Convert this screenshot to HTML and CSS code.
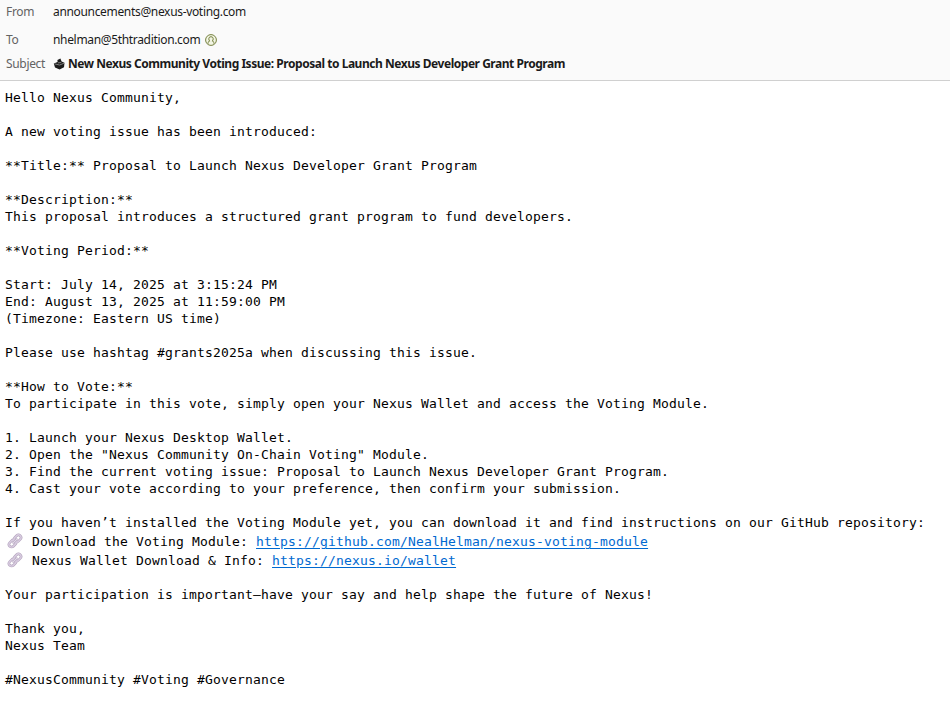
FILE: index.html
```
<!DOCTYPE html>
<html lang="en">
<head>
<meta charset="utf-8">
<title>New Nexus Community Voting Issue</title>
<link rel="stylesheet" href="styles.css">
</head>
<body>
<svg class="defs" width="0" height="0">
  <symbol id="link" viewBox="0 0 16 16">
    <g fill="none" transform="rotate(-45 8 8)">
      <g stroke="#b3a3bd" stroke-width="2.6">
        <rect x="0.6" y="5.4" width="7.6" height="5.2" rx="2.6"/>
        <rect x="7.8" y="5.4" width="7.6" height="5.2" rx="2.6"/>
      </g>
      <g stroke="#d9cde1" stroke-width="1.4">
        <rect x="0.6" y="5.4" width="7.6" height="5.2" rx="2.6"/>
        <rect x="7.8" y="5.4" width="7.6" height="5.2" rx="2.6"/>
      </g>
      <path stroke="#b3a3bd" stroke-width="2" stroke-linecap="round" d="M5.6 8H10.4"/>
      <path stroke="#e4dbea" stroke-width="1" stroke-linecap="round" d="M5.6 8H10.4"/>
    </g>
  </symbol>
</svg>
<header class="header">
  <div class="row from"><span class="label">From</span><span class="value">announcements@nexus-voting.com</span></div>
  <div class="row to"><span class="label">To</span><span class="value">nhelman@5thtradition.com</span>
    <svg class="contact" width="12" height="12" viewBox="0 0 12 12" fill="none" stroke="#75803f"><circle cx="6" cy="6" r="5.4" fill="#f2f5e4"/><path d="M3.2 9.6V8.4Q3.2 7.4 4.7 7.1Q3.8 6.2 3.8 4.7Q4 2.7 6 2.7T8.2 4.7Q8.2 6.2 7.3 7.1Q8.8 7.4 8.8 8.4V9.6"/></svg>
  </div>
  <div class="row subject"><span class="label">Subject</span>
    <svg class="ballot" width="12" height="12" viewBox="0 0 12 12"><path fill="#1c1c1c" d="M.8 5.4 4.6 3.9 4.4 1.9 7.4.6 8.6 3.6 11.5 4.8 11 9.2 6.6 11.4 2 9.6Z"/><path stroke="#aaa" stroke-width=".7" fill="none" d="M1.4 5.8 6.6 7 11 5.2M4.9 4.9 8.3 4.5"/></svg>
    <span class="value title">New Nexus Community Voting Issue: Proposal to Launch Nexus Developer Grant Program</span></div>
</header>
<main class="message">
<div class="text">Hello Nexus Community,

A new voting issue has been introduced:

**Title:** Proposal to Launch Nexus Developer Grant Program

**Description:**
This proposal introduces a structured grant program to fund developers.

**Voting Period:**

Start: July 14, 2025 at 3:15:24 PM
End: August 13, 2025 at 11:59:00 PM
(Timezone: Eastern US time)

Please use hashtag #grants2025a when discussing this issue.

**How to Vote:**
To participate in this vote, simply open your Nexus Wallet and access the Voting Module.

1. Launch your Nexus Desktop Wallet.
2. Open the "Nexus Community On-Chain Voting" Module.
3. Find the current voting issue: Proposal to Launch Nexus Developer Grant Program.
4. Cast your vote according to your preference, then confirm your submission.

If you haven’t installed the Voting Module yet, you can download it and find instructions on our GitHub repository:</div>
<div class="resource"><svg class="chain" width="16" height="16"><use href="#link"/></svg><span>Download the Voting Module: <a href="#">https://github.com/NealHelman/nexus-voting-module</a></span></div>
<div class="resource"><svg class="chain" width="16" height="16"><use href="#link"/></svg><span>Nexus Wallet Download &amp; Info: <a href="#">https://nexus.io/wallet</a></span></div>
<div class="text closing">Your participation is important—have your say and help shape the future of Nexus!

Thank you,
Nexus Team

#NexusCommunity #Voting #Governance</div>
</main>
</body>
</html>
```
FILE: styles.css
```
body { margin: 0; background: #fff; }
.defs { display: block; position: absolute; }
.header {
  height: 80px;
  border-bottom: 1px solid #d0d0d0;
  background: #fafafa;
  font: 12px/24px "Noto Sans", sans-serif;
  letter-spacing: -0.33px;
  color: #1a1a1a;
}
.row { display: flex; align-items: center; height: 24px; padding-left: 6px; white-space: nowrap; }
.to { margin-top: 4px; }
.label { width: 47px; flex: none; color: #636363; }
.contact { margin-left: 5px; }
.ballot { margin-right: 3px; }
.title { font-weight: 700; letter-spacing: -0.465px; }
.message {
  padding: 8px 5px;
  font: 13px/17px "DejaVu Sans Mono", monospace;
  letter-spacing: 0.174px;
  color: #000;
}
.text { white-space: pre; }
.resource { display: flex; align-items: flex-end; height: 19px; white-space: pre; }
.chain { margin: 0 9px 1px 2px; }
.closing { margin-top: 17px; }
a { color: #0069d0; text-underline-offset: 2px; }
```
